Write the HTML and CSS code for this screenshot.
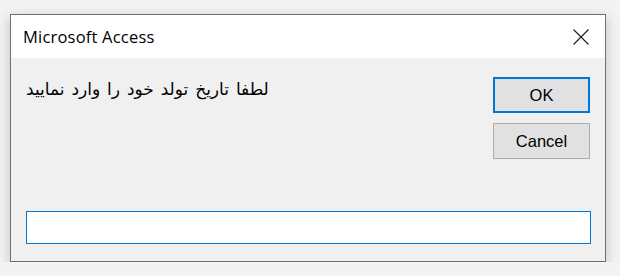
FILE: index.html
```html
<!DOCTYPE html>
<html lang="fa">
<head>
    <meta charset="UTF-8">
    <title>Microsoft Access</title>
    <link rel="stylesheet" href="styles.css">
</head>
<body>
    <div class="dialog">
        <div class="title-bar">
            <span class="title">Microsoft Access</span>
            <svg class="close" width="16" height="16" viewBox="0 0 16 16">
                <path d="M0.5 0.5 L15.5 15.5 M15.5 0.5 L0.5 15.5" stroke="#1a1a1a" stroke-width="1.1" fill="none"/>
            </svg>
        </div>
        <div class="dialog-body">
            <div class="top-row">
                <p class="message" dir="rtl">لطفا تاریخ تولد خود را وارد نمایید</p>
                <div class="buttons">
                    <button class="btn btn-default">OK</button>
                    <button class="btn">Cancel</button>
                </div>
            </div>
            <input type="text" class="answer">
        </div>
    </div>
</body>
</html>
```

FILE: styles.css
```css
body {
    margin: 0;
    background: #f3f3f3;
    font-family: "Liberation Sans", Arial, sans-serif;
}

.dialog {
    width: 594px;
    height: 246px;
    margin: 14px 0 0 10px;
    border: 1px solid #707070;
    background: #f0f0f0;
    box-shadow: 0 4px 12px rgba(0, 0, 0, 0.22);
    display: flex;
    flex-direction: column;
}

.title-bar {
    height: 43px;
    background: #fff;
    display: flex;
    align-items: center;
    justify-content: space-between;
    padding: 0 16px 0 12px;
}

.title {
    font-family: "Open Sans", sans-serif;
    font-size: 16.5px;
    letter-spacing: 0.2px;
    color: #000;
    margin-top: -1px;
}

.close {
    display: block;
}

.dialog-body {
    flex: 1;
    display: flex;
    flex-direction: column;
    padding: 19px 15px 17px 15px;
}

.top-row {
    display: flex;
    justify-content: space-between;
    flex: 1;
}

.message {
    margin: 2px 0 0 0;
    font-family: "DejaVu Sans", sans-serif;
    font-size: 17px;
    word-spacing: 1.5px;
    color: #000;
    align-self: flex-start;
}

.buttons {
    display: flex;
    flex-direction: column;
    gap: 10px;
}

.btn {
    width: 97px;
    height: 36px;
    background: #e1e1e1;
    border: 1px solid #adadad;
    font-family: "Liberation Sans", Arial, sans-serif;
    font-size: 16.5px;
    color: #000;
    padding: 0;
    margin: 0;
}

.btn-default {
    border: 2px solid #0078d7;
}

.answer {
    display: block;
    width: 565px;
    height: 33px;
    box-sizing: border-box;
    margin: 0;
    border: 1px solid #0078d7;
    background: #fff;
    outline: none;
}
```
